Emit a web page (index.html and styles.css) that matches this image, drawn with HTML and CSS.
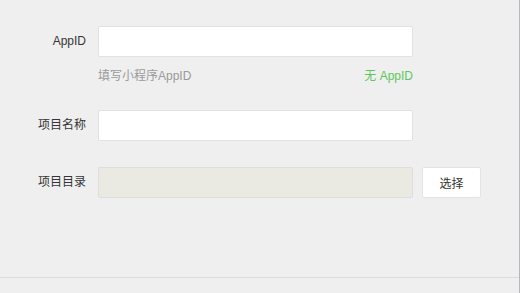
FILE: index.html
```html
<!DOCTYPE html>
<html lang="zh">
<head>
<meta charset="utf-8">
<link rel="stylesheet" href="styles.css">
</head>
<body>
<div class="window">
  <div class="form">
    <div class="row">
      <label class="label">AppID</label>
      <div class="input"></div>
    </div>
    <div class="hint-row">
      <span class="hint">填写小程序AppID</span>
      <span class="no-appid">无 AppID</span>
    </div>
    <div class="row">
      <label class="label">项目名称</label>
      <div class="input"></div>
    </div>
    <div class="row">
      <label class="label">项目目录</label>
      <div class="input disabled"></div>
      <button class="btn">选择</button>
    </div>
  </div>
  <div class="footer"></div>
</div>
</body>
</html>
```

FILE: styles.css
```css
html, body {
  margin: 0;
  padding: 0;
  background: #efefef;
}
body {
  font-family: "Liberation Sans", "Noto Sans CJK SC", sans-serif;
  font-size: 12px;
  color: #353535;
}
.window {
  width: 519px;
  height: 293px;
  border-right: 1px solid #b4b8bc;
  display: flex;
  flex-direction: column;
}
.form {
  flex: 1;
  padding-top: 26px;
  display: flex;
  flex-direction: column;
  gap: 26px;
}
.row {
  display: flex;
  align-items: center;
  height: 31px;
}
.label {
  width: 86px;
  text-align: right;
  margin-right: 12px;
  line-height: 16px;
  padding-bottom: 2px;
}
.input {
  width: 313px;
  height: 29px;
  background: #fff;
  border: 1px solid #e2e2e2;
  border-radius: 2px;
}
.input.disabled {
  background: #eaeae3;
  border-color: #dedede;
}
.btn {
  margin-left: 9px;
  width: 59px;
  height: 31px;
  background: #fff;
  border: 1px solid #e4e4e4;
  border-radius: 2px;
  font-family: inherit;
  font-size: 12px;
  color: #353535;
  padding: 0;
}
.hint-row {
  display: flex;
  justify-content: space-between;
  width: 315px;
  margin-left: 98px;
  margin-top: -16px;
  margin-bottom: -1px;
  line-height: 18px;
  height: 18px;
}
.hint {
  color: #9a9a9a;
}
.no-appid {
  color: #5cc85c;
}
.footer {
  height: 15px;
  border-top: 1px solid #dcdcdc;
}
```
